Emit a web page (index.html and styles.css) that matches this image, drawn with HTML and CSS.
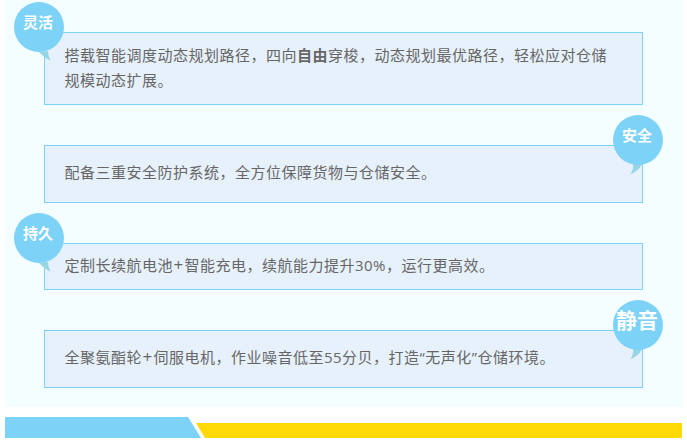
FILE: index.html
```html
<!DOCTYPE html>
<html lang="zh">
<head>
<meta charset="utf-8">
<title>特点</title>
<link rel="stylesheet" href="styles.css">
</head>
<body>
<main class="page">
  <section class="panel">
    <div class="card card-one">
      <div class="bubble bubble-left">
        <svg class="tail" viewBox="0 0 14 14"><path d="M1 3 Q7 9.3 12.6 11.7 Q10 7.7 10 2Z"/></svg>
        <span class="disc">灵活</span>
      </div>
      <p>搭载智能调度动态规划路径，四向<b>自由</b>穿梭，动态规划最优路径，轻松应对仓储规模动态扩展。</p>
    </div>
    <div class="card card-two">
      <div class="bubble bubble-right">
        <svg class="tail" viewBox="0 0 14 14"><path d="M0 12 Q8.3 9.7 12 2 L3 1 Q4 8 0 12Z"/></svg>
        <span class="disc">安全</span>
      </div>
      <p>配备三重安全防护系统，全方位保障货物与仓储安全。</p>
    </div>
    <div class="card card-three">
      <div class="bubble bubble-left">
        <svg class="tail" viewBox="0 0 14 14"><path d="M1 3 Q7 9.3 12.6 11.7 Q10 7.7 10 2Z"/></svg>
        <span class="disc">持久</span>
      </div>
      <p>定制长续航电池<span class="plus">+</span>智能充电，续航能力提升30%，运行更高效。</p>
    </div>
    <div class="card card-four">
      <div class="bubble bubble-right">
        <svg class="tail" viewBox="0 0 14 14"><path d="M0 12 Q8.3 9.7 12 2 L3 1 Q4 8 0 12Z"/></svg>
        <span class="disc disc-large">静音</span>
      </div>
      <p>全聚氨酯轮<span class="plus">+</span>伺服电机，作业噪音低至55分贝，打造“无声化”仓储环境。</p>
    </div>
  </section>
  <div class="footer-bar">
    <div class="bar-blue"></div>
    <div class="bar-yellow"></div>
  </div>
</main>
</body>
</html>
```
FILE: styles.css
```css
* { box-sizing: border-box; }
html, body { margin: 0; padding: 0; background: #fff; }
body { font-family: "Open Sans", "Noto Sans CJK SC", sans-serif; }
.page { width: 682px; height: 438px; padding-left: 5px; }
.panel {
  height: 407px;
  padding: 32px 39px 0;
  background: #f4fdff;
}
.card {
  position: relative;
  width: 599px;
  border: 1px solid #7dd2f7;
  background: #e6f1fc;
  padding: 0 20px 3px 19.5px;
  display: flex;
  align-items: center;
}
.card p {
  margin: 0;
  font-size: 15px;
  line-height: 25px;
  letter-spacing: .5px;
  color: #666;
}
.card b { font-weight: 700; }
.plus { font-size: 17px; line-height: 1; padding: 0 .6px; }
.card-one { height: 73px; padding-bottom: 1px; padding-right: 30px; }
.card-two { height: 58px; margin-top: 40px; }
.card-three { height: 47px; margin-top: 40px; }
.card-four { height: 58px; margin-top: 40px; }
.bubble { position: absolute; width: 50px; height: 50px; }
.bubble-left { left: -31px; top: -31px; }
.bubble-right { right: -21px; top: -31px; }
.disc {
  position: relative;
  display: flex;
  align-items: center;
  justify-content: center;
  width: 50px;
  height: 50px;
  padding: 0 2px 10px 0;
  border-radius: 50%;
  background: #7dd2f7;
  color: #fff;
  font-size: 15px;
  font-weight: 700;
  line-height: 1;
  white-space: nowrap;
}
.disc-large { font-size: 21px; }
.tail { position: absolute; width: 14px; height: 14px; fill: #97d5e4; }
.bubble-left .tail { left: 24px; top: 47px; }
.bubble-right .tail { left: 17px; top: 47px; }
.footer-bar { display: flex; height: 21px; margin-top: 10px; position: relative; }
.bar-blue {
  width: 199px;
  height: 21px;
  background: #7dd2f7;
  clip-path: polygon(0 0, 183px 0, 196px 21px, 0 21px);
}
.bar-yellow {
  flex: 1;
  height: 15px;
  margin-top: 6px;
  margin-left: -8px;
  background: #ffd903;
  clip-path: polygon(0 0, 100% 0, 100% 100%, 9px 100%);
}
```
